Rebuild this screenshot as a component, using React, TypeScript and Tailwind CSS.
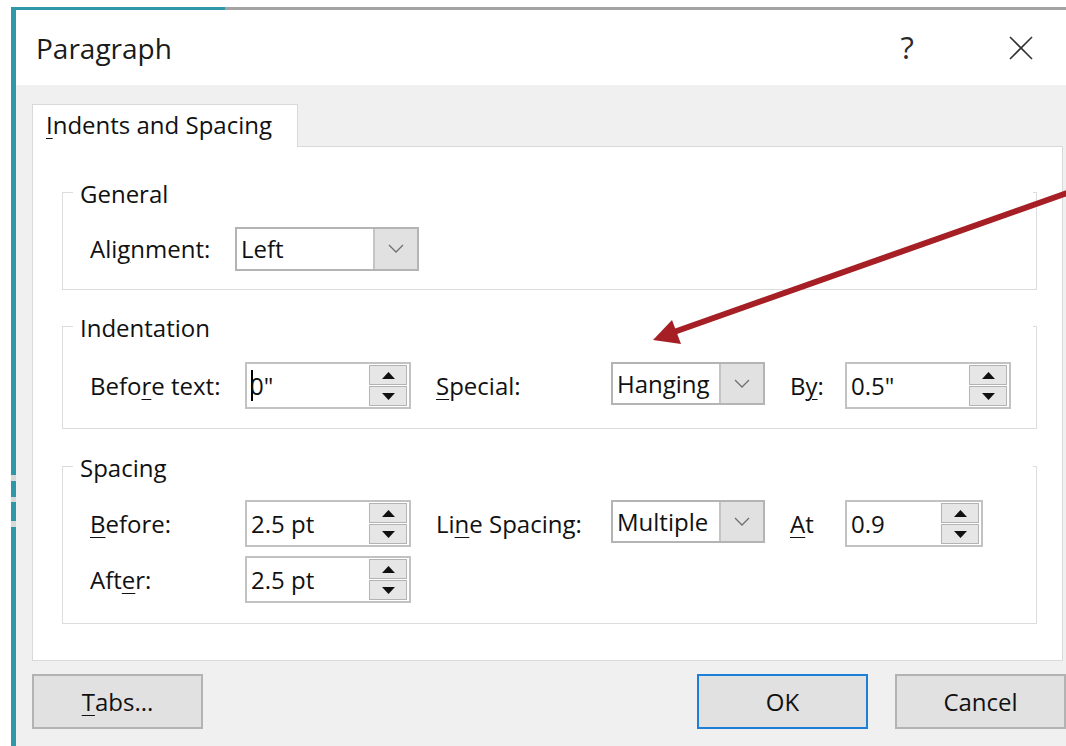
import React from 'react';

// Windows-style "Paragraph" dialog, Indents and Spacing tab

function Chevron() {
  return (
    <svg width="16" height="9" viewBox="0 0 16 9">
      <polyline points="1,1 8,8 15,1" fill="none" stroke="#6f6f6f" strokeWidth="1.3" />
    </svg>
  );
}

function Dropdown({ value, className }: { value: string; className: string }) {
  return (
    <div className={`flex border-2 border-[#b4b4b4] bg-white ${className}`}>
      <div className="flex flex-1 items-center overflow-hidden whitespace-nowrap pl-[4px]">{value}</div>
      <div className="flex w-[44px] items-center justify-center border-l-2 border-[#c4c4c4] bg-[#e1e1e1]">
        <Chevron />
      </div>
    </div>
  );
}

function SpinButton({ up }: { up?: boolean }) {
  return (
    <div className="flex flex-1 items-center justify-center border border-[#b3b3b3] bg-[#e6e6e6]">
      <svg width="13" height="7" viewBox="0 0 13 7">
        {up ? <polygon points="0,7 13,7 6.5,0" fill="#111" /> : <polygon points="0,0 13,0 6.5,7" fill="#111" />}
      </svg>
    </div>
  );
}

function Spin({ value, className, caret }: { value: string; className: string; caret?: boolean }) {
  return (
    <div className={`flex h-[47px] items-center border-2 border-[#c2c2c2] bg-white pr-[2px] ${className}`}>
      <div className="flex flex-1 items-center pl-[4px]">
        {caret && <span className="mr-[-3px] inline-block h-[31px] w-[2px] bg-black" />}
        <span>{value}</span>
      </div>
      <div className="flex h-[41px] w-[38px] flex-col gap-[1px]">
        <SpinButton up />
        <SpinButton />
      </div>
    </div>
  );
}

function Group({ title, bodyClass, children }: { title: string; bodyClass: string; children: React.ReactNode }) {
  return (
    <div className="w-[975px]">
      <div className="flex h-[32px]">
        <div className="mt-[14px] w-[11px] border-l border-t border-[#dcdcdc]" />
        <div className="px-[7px] leading-[32px]">{title}</div>
        <div className="flex-1" />
        <div className="mt-[14px] w-[4px] border-r border-t border-[#dcdcdc]" />
      </div>
      <div className={`border border-t-0 border-[#dcdcdc] pl-[27px] ${bodyClass}`}>{children}</div>
    </div>
  );
}

function Label({ children, className }: { children: React.ReactNode; className: string }) {
  return <div className={`flex h-[47px] shrink-0 items-center whitespace-nowrap ${className}`}>{children}</div>;
}

const U = ({ children }: { children: React.ReactNode }) => (
  <span className="underline decoration-1 underline-offset-[4px]">{children}</span>
);

function DialogButton({ children, className }: { children: React.ReactNode; className: string }) {
  return (
    <button className={`flex h-[55px] w-[171px] items-center justify-center border-2 bg-[#e1e1e1] text-[24px] text-[#111] ${className}`}>
      {children}
    </button>
  );
}

export default function App() {
  return (
    <div className="relative h-[746px] w-[1066px] overflow-hidden bg-white pl-[11px] pt-[7px] font-['Open_Sans',sans-serif] text-[24px] text-[#111]">
      <div className="flex h-full flex-col">
        {/* window frame top edge */}
        <div className="flex h-[3px] shrink-0">
          <div className="w-[214px] bg-[#2e98a9]" />
          <div className="flex-1 bg-[#a3a3a3]" />
        </div>

        <div className="flex flex-1">
          <div className="relative w-[5px] bg-[#2e98a9]">
            <div className="absolute left-0 top-[465px] h-[6px] w-[5px] bg-[#d9d9d9]" />
            <div className="absolute left-0 top-[487px] h-[5px] w-[5px] bg-[#d9d9d9]" />
            <div className="absolute left-0 top-[511px] h-[6px] w-[5px] bg-[#d9d9d9]" />
          </div>

          <div className="flex flex-1 flex-col">
            {/* title bar */}
            <div className="flex h-[75px] shrink-0 items-center bg-white pl-[20px] pr-[33px]">
              <div className="text-[28px] text-[#1a1a1a]">Paragraph</div>
              <div className="flex-1" />
              <div className="text-[31px] leading-none text-[#2a2a2a]">?</div>
              <div className="ml-[95px]">
                <svg width="24" height="24" viewBox="0 0 24 24">
                  <line x1="1" y1="1" x2="23" y2="23" stroke="#333" strokeWidth="1.6" />
                  <line x1="23" y1="1" x2="1" y2="23" stroke="#333" strokeWidth="1.6" />
                </svg>
              </div>
            </div>

            {/* dialog body */}
            <div className="flex flex-1 flex-col bg-[#f0f0f0] pl-[16px] pt-[19px]">
              <div className="relative z-10 flex h-[43px] w-[266px] items-center border border-b-0 border-[#d9d9d9] bg-white pb-[2px] pl-[13px]">
                <span>
                  <U>I</U>ndents and Spacing
                </span>
              </div>

              <div className="-mt-px flex h-[515px] w-[1031px] flex-col border border-[#d9d9d9] bg-white pl-[29px] pt-[31px]">
                <Group title="General" bodyClass="h-[80px] pt-[15px]">
                  <div className="flex items-center">
                    <Label className="w-[145px]">
                      <span>
                        Ali<U>g</U>nment:
                      </span>
                    </Label>
                    <Dropdown value="Left" className="h-[44px] w-[184px]" />
                  </div>
                </Group>

                <div className="h-[22px]" />

                <Group title="Indentation" bodyClass="h-[85px] pt-[18px]">
                  <div className="flex items-start">
                    <Label className="w-[155px]">
                      <span>
                        Befo<U>r</U>e text:
                      </span>
                    </Label>
                    <Spin value={'0"'} caret className="w-[166px]" />
                    <Label className="ml-[25px] w-[175px]">
                      <span>
                        <U>S</U>pecial:
                      </span>
                    </Label>
                    <Dropdown value="Hanging" className="h-[43px] w-[154px]" />
                    <Label className="ml-[25px] w-[55px]">
                      <span>
                        B<U>y</U>:
                      </span>
                    </Label>
                    <Spin value={'0.5"'} className="w-[166px]" />
                  </div>
                </Group>

                <div className="h-[23px]" />

                <Group title="Spacing" bodyClass="h-[140px] pt-[16px]">
                  <div className="flex flex-col gap-[9px]">
                    <div className="flex items-start">
                      <Label className="w-[155px]">
                        <span>
                          <U>B</U>efore:
                        </span>
                      </Label>
                      <Spin value="2.5 pt" className="w-[166px]" />
                      <Label className="ml-[25px] w-[175px]">
                        <span>
                          Li<U>n</U>e Spacing:
                        </span>
                      </Label>
                      <Dropdown value="Multiple" className="h-[43px] w-[154px]" />
                      <Label className="ml-[25px] w-[55px]">
                        <span>
                          <U>A</U>t
                        </span>
                      </Label>
                      <Spin value="0.9" className="w-[138px]" />
                    </div>
                    <div className="flex items-start">
                      <Label className="w-[155px]">
                        <span>
                          Aft<U>e</U>r:
                        </span>
                      </Label>
                      <Spin value="2.5 pt" className="w-[166px]" />
                    </div>
                  </div>
                </Group>
              </div>

              {/* button row */}
              <div className="mt-[13px] flex">
                <DialogButton className="border-[#b3b3b3]">
                  <span>
                    <U>T</U>abs...
                  </span>
                </DialogButton>
                <div className="flex-1" />
                <DialogButton className="border-[#1e7fd8]">OK</DialogButton>
                <DialogButton className="ml-[27px] border-[#b3b3b3]">Cancel</DialogButton>
              </div>
            </div>
          </div>
        </div>
      </div>

      {/* callout arrow */}
      <svg className="pointer-events-none absolute left-0 top-0" width="1066" height="746" viewBox="0 0 1066 746">
        <line x1="1070" y1="192" x2="674" y2="332" stroke="#a51f25" strokeWidth="6" />
        <polygon points="653,340 672,320 681,344" fill="#a51f25" />
      </svg>
    </div>
  );
}
